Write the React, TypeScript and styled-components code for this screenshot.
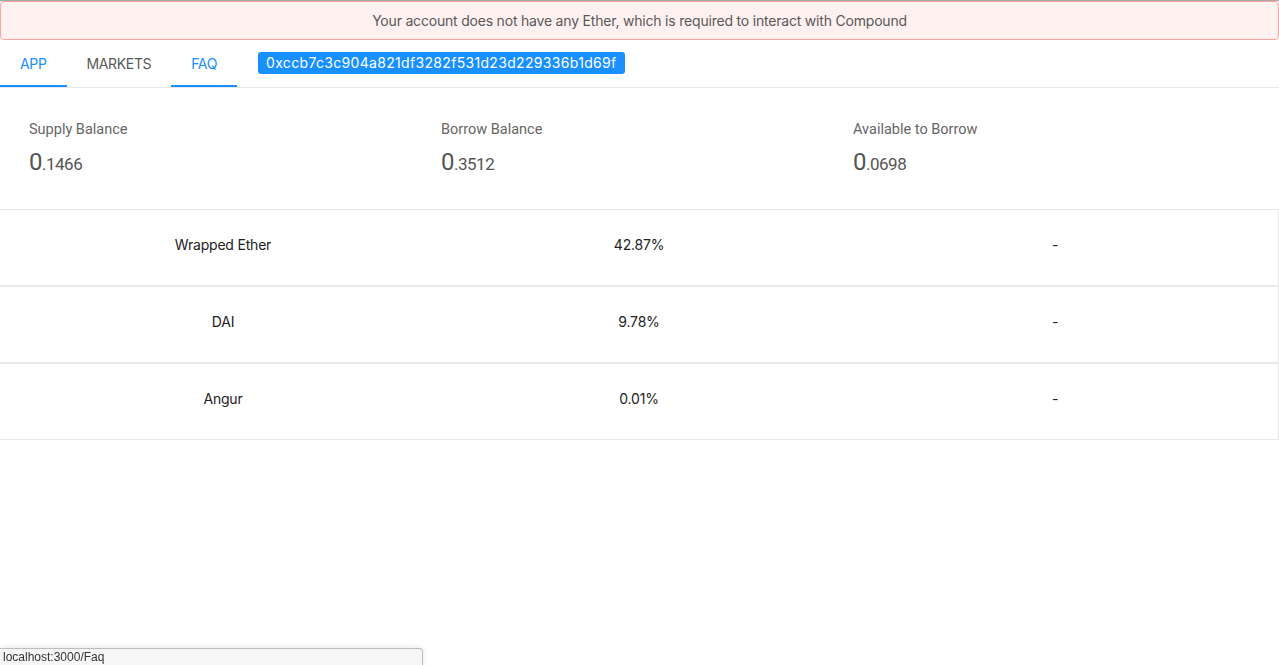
import styled, { createGlobalStyle } from "styled-components";

const GlobalStyle = createGlobalStyle`
  html, body {
    margin: 0;
    padding: 0;
    background: #fff;
  }
  body {
    font-family: Inter, "Noto Sans", sans-serif;
    border-top: 1px solid #a9a9a9;
  }
`;

const Page = styled.div`
  min-height: 664px;
  position: relative;
`;

const Alert = styled.div`
  height: 37px;
  display: flex;
  align-items: center;
  justify-content: center;
  background: #fff1f0;
  border: 1px solid #ffa39e;
  border-radius: 4px;
  color: #595959;
  font-size: 14px;
  letter-spacing: -0.2px;
`;

const Nav = styled.nav`
  display: flex;
  align-items: center;
  height: 47px;
  border-bottom: 1px solid #e8e8e8;
`;

const Tab = styled.div<{ $active?: boolean }>`
  height: 100%;
  box-sizing: border-box;
  padding: 2px 20px 0;
  display: flex;
  align-items: center;
  font-family: Inter, sans-serif;
  font-size: 14px;
  letter-spacing: -0.35px;
  color: ${(p) => (p.$active ? "#1890ff" : "#595959")};
  border-bottom: 2px solid ${(p) => (p.$active ? "#1890ff" : "transparent")};
`;

const Address = styled.div`
  margin-left: 21px;
  margin-top: -2px;
  height: 22px;
  padding: 0 8px;
  display: flex;
  align-items: center;
  background: #1890ff;
  color: #fff;
  border-radius: 3px;
  font-size: 14px;
  letter-spacing: 0.32px;
`;

const Balances = styled.section`
  display: grid;
  grid-template-columns: repeat(3, 412px);
  padding: 33px 0 0 29px;
  height: 121px;
  box-sizing: border-box;
`;

const Stat = styled.div`
  display: flex;
  flex-direction: column;
  gap: 10px;
`;

const Label = styled.div`
  font-family: Roboto, sans-serif;
  font-size: 14.5px;
  color: #666;
`;

const Value = styled.div`
  font-family: Roboto, sans-serif;
  font-size: 24px;
  line-height: 28px;
  color: #555;
  letter-spacing: -0.5px;
  span {
    font-size: 17px;
  }
`;

const Table = styled.div`
  display: flex;
  flex-direction: column;
`;

const Row = styled.div`
  display: grid;
  grid-template-columns: repeat(3, 416px);
  padding: 0 0 6px 15px;
  height: 77px;
  box-sizing: border-box;
  align-items: center;
  border: 1px solid #e8e8e8;
  border-left: none;
  font-family: Inter, sans-serif;
  font-size: 14px;
  letter-spacing: -0.2px;
  color: #222;
`;

const Cell = styled.div`
  text-align: center;
`;

const StatusBar = styled.div`
  position: fixed;
  left: 0;
  bottom: 0;
  width: 423px;
  height: 17px;
  box-sizing: border-box;
  background: #f6f6f6;
  border-top: 1px solid #bdbdbd;
  border-right: 1px solid #bdbdbd;
  border-top-right-radius: 4px;
  box-shadow: 0 0 6px rgba(0, 0, 0, 0.12);
  padding-left: 3px;
  font-family: "Liberation Sans", Arial, sans-serif;
  font-size: 12px;
  line-height: 16px;
  color: #333;
`;

const markets = [
  { name: "Wrapped Ether", rate: "42.87%", extra: "-" },
  { name: "DAI", rate: "9.78%", extra: "-" },
  { name: "Angur", rate: "0.01%", extra: "-" },
];

const balances = [
  { label: "Supply Balance", whole: "0", dec: ".1466" },
  { label: "Borrow Balance", whole: "0", dec: ".3512" },
  { label: "Available to Borrow", whole: "0", dec: ".0698" },
];

export default function App() {
  return (
    <Page>
      <GlobalStyle />
      <Alert>Your account does not have any Ether, which is required to interact with Compound</Alert>
      <Nav>
        <Tab $active>APP</Tab>
        <Tab>MARKETS</Tab>
        <Tab $active>FAQ</Tab>
        <Address>0xccb7c3c904a821df3282f531d23d229336b1d69f</Address>
      </Nav>
      <Balances>
        {balances.map((b) => (
          <Stat key={b.label}>
            <Label>{b.label}</Label>
            <Value>
              {b.whole}
              <span>{b.dec}</span>
            </Value>
          </Stat>
        ))}
      </Balances>
      <Table>
        {markets.map((m) => (
          <Row key={m.name}>
            <Cell>{m.name}</Cell>
            <Cell>{m.rate}</Cell>
            <Cell>{m.extra}</Cell>
          </Row>
        ))}
      </Table>
      <StatusBar>localhost:3000/Faq</StatusBar>
    </Page>
  );
}
